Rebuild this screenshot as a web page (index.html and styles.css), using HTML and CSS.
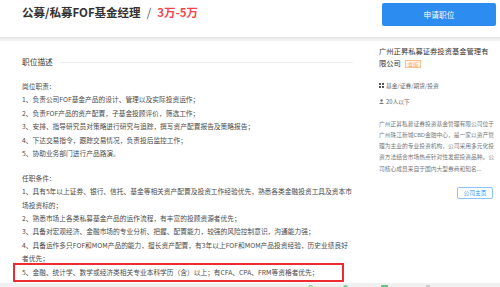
FILE: index.html
```html
<html><head>
  <meta charset="UTF-8">
  <meta name="viewport" content="width=device-width, initial-scale=1.0">
  <title>公募/私募FOF基金经理</title>
  <link rel="stylesheet" href="styles.css">
  </head>
  <body>
    <div class="job-header">
      <h1 class="job-title">公募/私募FOF基金经理<span class="sep">/</span><span class="salary">3万-5万</span></h1>
      <button class="apply-btn">申请职位</button>
    </div>
    <div class="header-shadow"></div>

    <div class="main">
      <div class="job-detail">
        <div class="section-title">
          <h2>职位描述</h2>
          <span class="rule"></span>
        </div>
        <div class="job-desc">
          <div class="desc-block">
            <p>岗位职责：</p>
            <p>1、负责公司FOF基金产品的设计、管理以及实际投资运作；</p>
            <p>2、负责FOF产品的资产配置，子基金投顾评价，筛选工作；</p>
            <p>3、安排、指导研究员对策略进行研究与追踪，撰写资产配置报告及策略报告；</p>
            <p>4、下达交易指令，跟踪交易情况，负责投后监控工作；</p>
            <p>5、协助业务部门进行产品路演。</p>
          </div>
          <div class="desc-block">
            <p>任职条件：</p>
            <p>1、具有5年以上证券、银行、信托、基金等相关资产配置及投资工作经验优先，熟悉各类金融投资工具及资本市场投资标的；</p>
            <p>2、熟悉市场上各类私募基金产品的运作流程，有丰富的投顾资源者优先；</p>
            <p>3、具备对宏观经济、金融市场的专业分析、把握、配置能力，较强的风险控制意识，沟通能力强；</p>
            <p>4、具备运作多只FOF和MOM产品的能力，擅长资产配置，有3年以上FOF和MOM产品投资经验，历史业绩良好者优先；</p>
            <p class="highlight">5、金融、统计学、数学或经济类相关专业本科学历（含）以上；有CFA、CPA、FRM等资格者优先；</p>
          </div>
        </div>
      </div>

      <div class="company">
        <div class="company-name">广州正昇私募证券投资基金管理有限公司<span class="vip-tag">会员</span></div>
        <div class="company-meta">
          <span class="icon-grid"><i></i><i></i><i></i><i></i></span>
          <span>基金/证券/期货/投资</span>
        </div>
        <div class="company-meta">
          <svg class="icon-user" width="5" height="5" viewBox="0 0 10 10">
            <circle cx="5" cy="3" r="2.4" fill="#777"/>
            <path d="M0.5 10 C1 6.5 9 6.5 9.5 10 Z" fill="#777"/>
          </svg>
          <span>20人以下</span>
        </div>
        <p class="company-intro">广州正昇私募证券投资基金管理有限公司位于广州珠江新城CBD金融中心，是一家以资产管理为主业的专业投资机构，公司采用多元化投资方法结合市场热点针对性发掘投资品种。公司核心成员来自于国内大型券商和知名...</p>
        <div class="company-actions">
          <button class="home-btn">公司主页</button>
        </div>
      </div>
    </div>

    <div class="footer-strip">
      <span class="dot dot-ring"></span>
      <span class="dot dot-green"></span>
      <span class="dot dot-bar"></span>
      <span class="dot dot-gray"></span>
    </div>
  </body>
  </html>
```

FILE: styles.css
```css
:root {
  --primary-color: #2d8cf0;
  --title-color: #333;
  --text-color: #4a4a4a;
  --muted-color: #777;
  --salary-color: #f5454c;
}

body {
  font-family: "Noto Sans CJK SC", sans-serif;
  margin: 0;
  padding: 0;
  background-color: white;
  color: var(--text-color);
  overflow: hidden;
}

.job-header {
  display: flex;
  justify-content: space-between;
  align-items: flex-start;
  height: 37px;
  padding-left: 22px;
  padding-right: 4px;
}

.job-title {
  margin: 4px 0 0;
  font-size: 11.5px;
  line-height: 16px;
  font-weight: bold;
  color: var(--title-color);
}

.job-title .sep {
  font-weight: normal;
  color: #555;
  margin: 0 6px;
}

.job-title .salary {
  color: var(--salary-color);
}

.apply-btn {
  margin-top: 3px;
  width: 114px;
  height: 23px;
  border: none;
  border-radius: 2px;
  background-color: var(--primary-color);
  color: white;
  font-family: inherit;
  font-size: 7.7px;
  padding: 0;
}

.header-shadow {
  height: 4px;
  background: linear-gradient(#e6e6e6, #f5f5f5);
}

.main {
  display: flex;
  height: 242px;
}

.job-detail {
  width: 331px;
  padding-left: 22px;
  padding-top: 15px;
  flex: none;
}

.section-title {
  display: flex;
  align-items: center;
  gap: 7px;
  height: 12px;
}

.section-title h2 {
  margin: 0;
  font-size: 7.7px;
  line-height: 12px;
  font-weight: normal;
  color: var(--title-color);
}

.section-title .rule {
  flex-grow: 1;
  height: 1px;
  background-color: #eee;
}

.job-desc {
  margin-top: 12px;
  font-size: 6.72px;
}

.desc-block + .desc-block {
  margin-top: 11px;
}

.job-desc p {
  margin: 0;
  line-height: 13.44px;
}

.job-desc .highlight {
  margin: -3px 0 0 -9px;
  padding: 1px 0 1px 7px;
  width: 320px;
  border: 2px solid #ee2b30;
}

.company {
  width: 116px;
  margin-left: 26px;
  padding-top: 5px;
}

.company-name {
  font-size: 7.3px;
  line-height: 11.5px;
  color: var(--title-color);
}

.vip-tag {
  display: inline-block;
  margin-left: 4px;
  padding: 0 2px;
  font-size: 5px;
  line-height: 6px;
  color: #f5923e;
  background-color: #fff3e8;
  border: 1px solid #f9c08e;
  vertical-align: middle;
}

.company-meta {
  display: flex;
  align-items: center;
  gap: 2px;
  font-size: 5.76px;
  line-height: 11.5px;
  color: #666;
  margin-top: 4.5px;
}

.company-name + .company-meta {
  margin-top: 10.5px;
}

.icon-grid {
  display: grid;
  grid-template-columns: 2px 2px;
  gap: 1px;
  width: 5px;
}

.icon-grid i {
  width: 2px;
  height: 2px;
  background-color: #555;
}

.company-intro {
  width: 115.3px;
  margin: 11.5px 0 0;
  font-family: "Noto Sans", "Noto Sans CJK SC", sans-serif;
  font-size: 5.76px;
  line-height: 11.3px;
  color: var(--muted-color);
}

.company-actions {
  display: flex;
  justify-content: flex-end;
  margin-top: 12px;
  padding-right: 2px;
}

.home-btn {
  width: 36px;
  height: 12px;
  padding: 0;
  border: 1px solid #8cc4f8;
  border-radius: 2px;
  background-color: white;
  color: var(--primary-color);
  font-family: inherit;
  font-size: 5.76px;
}

.footer-strip {
  display: flex;
  align-items: flex-start;
  height: 10px;
  padding-left: 308px;
  padding-top: 2px;
  background-color: #f0f0f0;
}

.dot {
  display: inline-block;
  width: 5px;
  height: 5px;
}

.dot-ring {
  border: 1px solid #5cc98a;
  border-radius: 50%;
  width: 3px;
  height: 3px;
}

.dot-green {
  margin-left: 30px;
  border-radius: 50%;
  background-color: #6fd39a;
}

.dot-bar {
  margin-left: 33px;
  width: 7px;
  background-color: #5cc98a;
}

.dot-gray {
  margin-left: 38px;
  width: 4px;
  background-color: #ccc;
}
```
